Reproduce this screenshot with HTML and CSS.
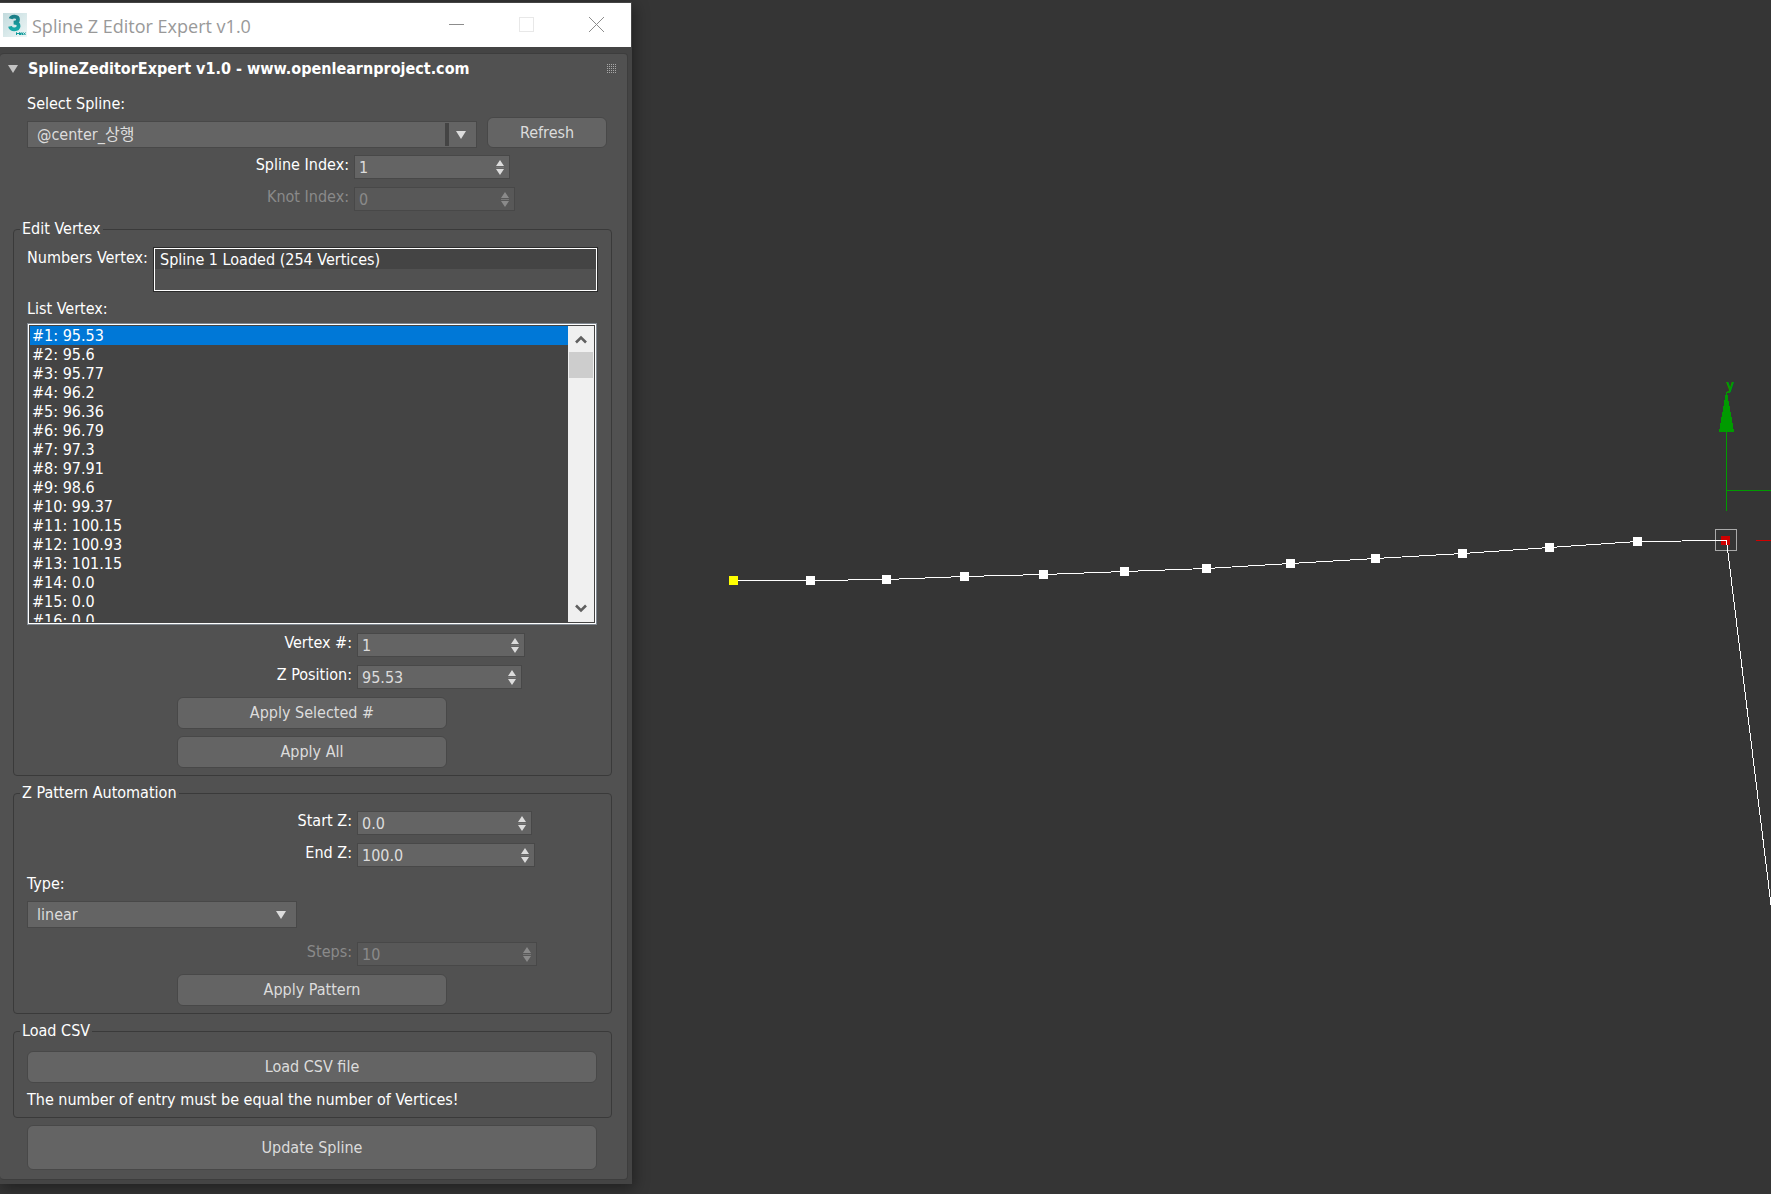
FILE: index.html
```
<!DOCTYPE html>
<html lang="en">
<head>
  <meta charset="UTF-8">
  <title>Spline Z Editor Expert v1.0</title>
  <link rel="stylesheet" href="styles.css">
</head>
<body>

<svg class="defs" width="0" height="0" aria-hidden="true">
  <symbol id="updown" viewBox="0 0 8 15">
    <path d="M4 0L8 6H0ZM4 15L0 9H8Z" fill="currentColor"/>
    <path d="M0 7.5H8" stroke="#777" stroke-width="1"/>
  </symbol>
  <symbol id="down" viewBox="0 0 10 8">
    <path d="M0 0H10L5 8Z" fill="currentColor"/>
  </symbol>
</svg>

<div class="window">
  <header class="titlebar">
    <svg class="logo" viewBox="0 0 24 24" width="24" height="24">
      <defs>
        <linearGradient id="tile" x1="0" y1="0" x2="1" y2="1">
          <stop offset="0" stop-color="#c3dbde"/>
          <stop offset="1" stop-color="#eef6f6"/>
        </linearGradient>
        <linearGradient id="three" x1="0" y1="0" x2="0" y2="1">
          <stop offset="0" stop-color="#1b7f88"/>
          <stop offset="1" stop-color="#17a9a8"/>
        </linearGradient>
      </defs>
      <rect width="24" height="24" fill="url(#tile)"/>
      <path d="M7.6 5.8C8.5 2.8 15 2.8 15 6.4C15 8.8 13 9.6 10.6 9.6C13.6 9.6 15.8 10.6 15.6 13.2C15.2 17.4 8 17.4 7 13.4" fill="none" stroke="url(#three)" stroke-width="3.8"/>
      <path d="M13.5 22V19.5L15 21L16.5 19.5V22M17.5 22V20H19.5V22M17.5 21H19.5M20.5 19.5L22.5 22M22.5 19.5L20.5 22" fill="none" stroke="#119c9c" stroke-width="1"/>
    </svg>
    <h1>Spline Z Editor Expert v1.0</h1>
    <button class="win-btn" aria-label="Minimize"><svg width="15" height="15"><path d="M0 7.5H15" stroke="#8c8c8c"/></svg></button>
    <button class="win-btn" aria-label="Maximize" disabled><svg width="15" height="15"><rect x="0.5" y="0.5" width="14" height="14" fill="none" stroke="#e8e8e8"/></svg></button>
    <button class="win-btn" aria-label="Close"><svg width="15" height="15"><path d="M0 0L15 15M15 0L0 15" stroke="#8c8c8c"/></svg></button>
  </header>

  <main class="rollout">
    <div class="rollout-head">
      <svg class="toggle"><use href="#down"/></svg>
      <h2>SplineZeditorExpert v1.0 - www.openlearnproject.com</h2>
      <span class="grip"></span>
    </div>

    <div class="pick">
      <label for="spline">Select Spline:</label>
      <div class="pick-row">
        <div class="combo split">
          <select id="spline"><option>@center_상행</option></select>
          <svg><use href="#down"/></svg>
        </div>
        <button class="btn refresh">Refresh</button>
      </div>
    </div>

    <div class="spin-row">
      <label for="splineIndex">Spline Index:</label>
      <div class="spinner w156"><input type="number" id="splineIndex" value="1"><svg><use href="#updown"/></svg></div>
    </div>
    <div class="spin-row off">
      <label for="knotIndex">Knot Index:</label>
      <div class="spinner w161"><input type="number" id="knotIndex" value="0" disabled><svg><use href="#updown"/></svg></div>
    </div>

    <fieldset class="edit">
      <legend>Edit Vertex</legend>
      <div class="status-row">
        <label for="status">Numbers Vertex:</label>
        <textarea id="status" readonly>Spline 1 Loaded (254 Vertices)</textarea>
      </div>
      <label class="list-label" for="vertices">List Vertex:</label>
      <div class="list">
        <select id="vertices" size="16">
          <option selected>#1: 95.53</option>
          <option>#2: 95.6</option>
          <option>#3: 95.77</option>
          <option>#4: 96.2</option>
          <option>#5: 96.36</option>
          <option>#6: 96.79</option>
          <option>#7: 97.3</option>
          <option>#8: 97.91</option>
          <option>#9: 98.6</option>
          <option>#10: 99.37</option>
          <option>#11: 100.15</option>
          <option>#12: 100.93</option>
          <option>#13: 101.15</option>
          <option>#14: 0.0</option>
          <option>#15: 0.0</option>
          <option>#16: 0.0</option>
        </select>
        <div class="scrollbar">
          <svg viewBox="0 0 12 9"><path d="M1 7.5L6 2.5L11 7.5" fill="none" stroke="#606060" stroke-width="2.6"/></svg>
          <div class="thumb"></div>
          <svg viewBox="0 0 12 9"><path d="M1 1.5L6 6.5L11 1.5" fill="none" stroke="#606060" stroke-width="2.6"/></svg>
        </div>
      </div>
      <div class="spin-row">
        <label for="vertexNo">Vertex #:</label>
        <div class="spinner w168"><input type="number" id="vertexNo" value="1"><svg><use href="#updown"/></svg></div>
      </div>
      <div class="spin-row">
        <label for="zPos">Z Position:</label>
        <div class="spinner w165"><input type="number" id="zPos" value="95.53" step="any"><svg><use href="#updown"/></svg></div>
      </div>
      <button class="btn mid">Apply Selected #</button>
      <button class="btn mid">Apply All</button>
    </fieldset>

    <fieldset class="pattern">
      <legend>Z Pattern Automation</legend>
      <div class="spin-row">
        <label for="startZ">Start Z:</label>
        <div class="spinner w175"><input type="number" id="startZ" value="0.0" step="any"><svg><use href="#updown"/></svg></div>
      </div>
      <div class="spin-row">
        <label for="endZ">End Z:</label>
        <div class="spinner w178"><input type="number" id="endZ" value="100.0" step="any"><svg><use href="#updown"/></svg></div>
      </div>
      <label class="type-label" for="type">Type:</label>
      <div class="combo type">
        <select id="type"><option>linear</option></select>
        <svg><use href="#down"/></svg>
      </div>
      <div class="spin-row off">
        <label for="steps">Steps:</label>
        <div class="spinner w180"><input type="number" id="steps" value="10" disabled><svg><use href="#updown"/></svg></div>
      </div>
      <button class="btn mid">Apply Pattern</button>
    </fieldset>

    <fieldset class="csv">
      <legend>Load CSV</legend>
      <button class="btn">Load CSV file</button>
      <p>The number of entry must be equal the number of Vertices!</p>
    </fieldset>

    <button class="btn update">Update Spline</button>
  </main>
</div>

<section class="viewport">
  <svg viewBox="632 0 1139 1194" preserveAspectRatio="xMinYMin slice" shape-rendering="crispEdges">
    <!-- y axis -->
    <g stroke="#009b00" fill="#009b00">
      <path d="M1726.5 431V511M1726 490.5H1771" fill="none"/>
      <path d="M1726.5 392L1733.5 431.5H1719.5Z"/>
    </g>
    <text x="1726" y="390">y</text>
    <path d="M1756 540.5H1771" stroke="#d00000"/>
    <rect x="1715.5" y="529.5" width="21" height="21" fill="none" stroke="#aaa"/>
    <rect x="1721" y="536" width="9" height="9" fill="#d00000"/>
    <polyline points="733.5,580.5 810.5,580.5 886.5,579.5 964.5,576.5 1043.5,574.5 1124.5,571.5 1206.5,568.5 1290.5,563.5 1375.5,558.5 1462.5,553.5 1549.5,547.5 1637.5,541.5 1726.5,540.5 1771.5,909" fill="none" stroke="#fff"/>
    <rect x="729" y="576" width="9" height="9" fill="#ff0"/>
    <g fill="#fff">
      <rect x="806" y="576" width="9" height="9"/>
      <rect x="882" y="575" width="9" height="9"/>
      <rect x="960" y="572" width="9" height="9"/>
      <rect x="1039" y="570" width="9" height="9"/>
      <rect x="1120" y="567" width="9" height="9"/>
      <rect x="1202" y="564" width="9" height="9"/>
      <rect x="1286" y="559" width="9" height="9"/>
      <rect x="1371" y="554" width="9" height="9"/>
      <rect x="1458" y="549" width="9" height="9"/>
      <rect x="1545" y="543" width="9" height="9"/>
      <rect x="1633" y="537" width="9" height="9"/>
    </g>
  </svg>
</section>

</body>
</html>
```
FILE: styles.css
```
* {
  box-sizing: border-box;
}
body {
  margin: 0;
  display: flex;
  align-items: flex-start;
  min-height: 100vh;
  overflow: hidden;
  background-color: #353535;
  color: #fff;
  font-family: "DejaVu Sans Condensed", "Noto Sans CJK KR", sans-serif;
  font-size: 16px;
  line-height: 20px;
}
button, select, input, textarea {
  font: inherit;
  margin: 0;
}
.defs {
  position: absolute;
}

/* window frame */
.window {
  flex: none;
  width: 632px;
  margin-top: 2px;
  padding-bottom: 4px;
  background-color: #444;
  border-top: 1px solid #444;
  box-shadow: 2px 4px 14px rgba(0, 0, 0, 0.4);
}
.titlebar {
  display: flex;
  align-items: center;
  height: 44px;
  margin-right: 1px;
  padding-left: 3px;
  background-color: #fff;
}
.titlebar h1 {
  flex: 1;
  margin: 0 0 0 5px;
  padding-top: 2px;
  color: #999;
  font-family: "Open Sans", sans-serif;
  font-size: 18px;
  font-weight: normal;
}
.win-btn {
  display: flex;
  align-items: center;
  justify-content: center;
  width: 70px;
  height: 40px;
  padding: 0 0 1px;
  border: 0;
  background: none;
}

/* rollout */
.rollout {
  display: flex;
  flex-direction: column;
  margin: 6px 4px 0 0;
  padding: 5px 15px 9px 13px;
  background-color: #515151;
  border: solid #3d3d3d;
  border-width: 1px 1px 1px 0;
  border-radius: 4px;
}
.rollout-head {
  display: flex;
  align-items: center;
  margin: 0 -5px 0 -5px;
}
.toggle {
  width: 10px;
  height: 8px;
  color: #c4c4c4;
}
.rollout-head h2 {
  flex: 1;
  margin: 0 0 0 10px;
  font-size: 16px;
}
.grip {
  width: 10px;
  height: 10px;
  background: conic-gradient(#515151 75%, #a8a8a8 75%) 0 0 / 2px 2px;
}
.pick {
  margin: 15px 5px 7px 14px;
}
.pick label {
  display: block;
}
.pick-row {
  display: flex;
  align-items: flex-end;
  margin-top: 3px;
  gap: 10px;
}

/* controls */
.btn {
  height: 32px;
  padding: 0;
  color: #dcdcdc;
  background-color: #646464;
  border: 1px solid #484848;
  border-radius: 6px;
}
.refresh {
  width: 120px;
  height: 31px;
}
.combo {
  position: relative;
  flex: 1;
  height: 27px;
}
.combo select {
  width: 100%;
  height: 100%;
  padding: 0 9px;
  appearance: none;
  color: #dcdcdc;
  background-color: #646464;
  border: 1px solid #484848;
  border-radius: 0;
}
.combo svg {
  position: absolute;
  top: 10px;
  right: 11px;
  width: 10px;
  height: 8px;
  color: #dcdcdc;
}
.split::after {
  content: "";
  position: absolute;
  top: 2px;
  right: 28px;
  width: 4px;
  height: 23px;
  background-color: #444;
}
.spin-row {
  display: flex;
  gap: 5px;
  margin-bottom: 8px;
}
.spin-row label {
  width: 336px;
  text-align: right;
}
.spinner {
  display: flex;
  align-items: center;
  height: 24px;
  padding: 0 5px 0 4px;
  color: #dcdcdc;
  background-color: #646464;
  border: 1px solid #484848;
}
.spinner input {
  flex: 1;
  min-width: 0;
  height: 22px;
  padding: 0;
  color: inherit;
  background: none;
  border: 0;
  appearance: textfield;
}
.spinner input::-webkit-inner-spin-button {
  display: none;
}
.spinner svg {
  width: 8px;
  height: 15px;
}
.off label, .off .spinner {
  color: #8a8a8a;
}
.off .spinner {
  background-color: #585858;
}
.w156 { width: 156px; }
.w161 { width: 161px; }
.w165 { width: 165px; }
.w168 { width: 168px; }
.w175 { width: 175px; }
.w178 { width: 178px; }
.w180 { width: 180px; }

/* groups */
fieldset {
  display: flex;
  flex-direction: column;
  min-width: 0;
  margin: 0 0 7px;
  padding: 0 14px 7px 13px;
  border: 1px solid #3a3a3a;
  border-radius: 4px;
}
legend {
  margin-left: -7px;
  padding: 0 2px;
}
fieldset .spin-row label {
  width: 325px;
}
.mid {
  align-self: center;
  width: 270px;
}
.mid + .mid {
  margin-top: 7px;
}
.status-row {
  display: flex;
  gap: 6px;
  margin-top: 9px;
}
.status-row label {
  width: 121px;
  white-space: nowrap;
}
textarea {
  flex: 1;
  height: 43px;
  padding: 1px 5px;
  resize: none;
  outline: 0;
  overflow: hidden;
  color: #fff;
  background: linear-gradient(#444 20px, #515151 20px);
  border: 1px solid #fff;
  box-shadow: 0 0 0 1px #2a2a2a;
}
.list-label {
  margin: 8px 0 4px;
}
.list {
  display: flex;
  height: 302px;
  margin-bottom: 8px;
  border: 1px solid #7f8790;
  outline: 1px solid #fff;
  outline-offset: -2px;
  padding: 2px;
  background-color: #444;
}
.list select {
  flex: 1;
  padding: 0;
  overflow: hidden;
  color: #fff;
  background-color: #444;
  border: 0;
  border-radius: 0;
  outline: 0;
}
.list option {
  height: 19px;
  min-height: 19px;
  padding: 0 2px;
}
.list option:checked {
  color: #fff;
  background: #0078d7 linear-gradient(#0078d7, #0078d7);
}
.scrollbar {
  display: flex;
  flex-direction: column;
  align-items: center;
  width: 26px;
  padding: 9px 0;
  background-color: #f0f0f0;
}
.scrollbar svg {
  width: 12px;
  height: 9px;
}
.thumb {
  width: 24px;
  height: 26px;
  margin: 8px 0 auto;
  background-color: #cdcdcd;
}
.pattern {
  padding-top: 8px;
}
.type-label {
  margin: -1px 0 7px;
}
.combo.type {
  flex: none;
  width: 270px;
  margin-bottom: 14px;
}
.csv {
  padding-top: 10px;
}
.csv p {
  margin: 7px 0 0;
}
.update {
  height: 45px;
  margin: 0 15px 0 14px;
}

/* 3d view */
.viewport {
  flex: 1;
  height: 100vh;
  position: relative;
  z-index: -1;
}
.viewport svg {
  display: block;
  width: 100%;
  height: 100%;
}
.viewport text {
  fill: #009b00;
  font-size: 14px;
  font-weight: bold;
}
```
